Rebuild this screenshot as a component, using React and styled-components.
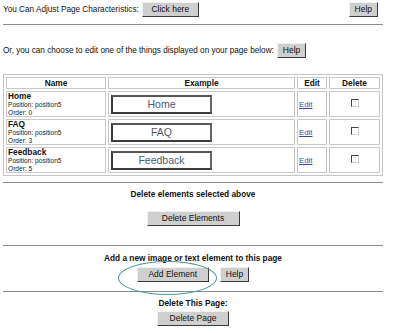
import React from "react";
import styled, { createGlobalStyle } from "styled-components";

const GlobalStyle = createGlobalStyle`
	body {
		margin: 0;
		background: #fff;
		font-family: "Liberation Sans", Arial, sans-serif;
		color: #111;
	}
`;

const Page = styled.div`
	width: 380px;
	padding: 2px 0 0 3px;
	font-size: 8.2px;
`;

const Row = styled.div`
	display: flex;
	align-items: center;
	justify-content: ${({ spread }) => (spread ? "space-between" : "flex-start")};
	gap: 3px;
	height: 15px;
	padding-right: ${({ spread }) => (spread ? 5 : 0)}px;
	margin-top: ${({ top }) => top || 0}px;
	white-space: nowrap;
`;

const Rule = styled.hr`
	border: none;
	border-top: 1px solid #8c8c8c;
	margin: ${({ top }) => top}px 0 0 0;
	height: 0;
`;

const Button = styled.button`
	font-family: "Liberation Sans", Arial, sans-serif;
	font-size: 8.5px;
	height: 15px;
	padding: 0 ${({ pad }) => pad || 5}px;
	background: #cfcfcf;
	border: 1px solid;
	border-color: #f2f2f2 #3a3a3a #3a3a3a #f2f2f2;
	color: #111;
	line-height: 13px;
	white-space: nowrap;
	width: ${({ w }) => (w ? w + "px" : "auto")};
`;

const Table = styled.table`
	margin-top: 16px;
	width: 380px;
	border-collapse: separate;
	border-spacing: 2px;
	border: 1px solid #c4c4c4;
`;

const Th = styled.th`
	border: 1px solid #c8c8c8;
	font-size: 8.3px;
	font-weight: bold;
	height: 10px;
	line-height: 10px;
	padding: 0;
	width: ${({ w }) => (w ? w + "px" : "auto")};
`;

const Td = styled.td`
	border: 1px solid #c8c8c8;
	padding: 0 1px;
	height: 23px;
	vertical-align: middle;
	text-align: ${({ align }) => align || "left"};
`;

const ItemName = styled.div`
	font-weight: bold;
	font-size: 8.3px;
	line-height: 9px;
`;

const ItemMeta = styled.div`
	font-size: 6.6px;
	line-height: 7.5px;
	color: #222;
`;

const Example = styled.div`
	box-sizing: border-box;
	width: 101px;
	height: 19px;
	border: 2px solid #3c3c3c;
	border-top-color: #555;
	border-right-color: #666;
	color: #4d5a70;
	font-size: 10.5px;
	text-align: center;
	line-height: 15px;
	margin-left: 1px;
`;

const EditLink = styled.a`
	color: #3a4aa8;
	font-size: 7.8px;
	text-decoration: underline;
`;

const Check = styled.span`
	display: inline-block;
	width: 6px;
	height: 6px;
	border: 1px solid #444;
	border-right-color: #ccc;
	border-bottom-color: #ccc;
`;

const Center = styled.div`
	display: flex;
	flex-direction: column;
	align-items: center;
	gap: ${({ gap }) => gap}px;
	padding-top: ${({ top }) => top}px;
`;

const Heading = styled.div`
	font-weight: bold;
	font-size: 8.3px;
	line-height: 11px;
`;

const Buttons = styled.div`
	display: flex;
	gap: 11px;
	position: relative;
`;

const Circle = styled.div`
	position: absolute;
	left: -19px;
	top: -6px;
	width: 99px;
	height: 34px;
	box-sizing: border-box;
	border: 1.5px solid #4f9a9a;
	border-radius: 50%;
	pointer-events: none;
`;

const items = [
	{ name: "Home", order: 0 },
	{ name: "FAQ", order: 3 },
	{ name: "Feedback", order: 5 },
];

export default function App() {
	return (
		<>
			<GlobalStyle />
			<Page>
				<Row spread>
					<Row>
						<span>You Can Adjust Page Characteristics:</span>
						<Button w={57}>Click here</Button>
					</Row>
					<Button>Help</Button>
				</Row>
				<Rule top={7} />
				<Row top={18}>
					<span>Or, you can choose to edit one of the things displayed on your page below:</span>
					<Button>Help</Button>
				</Row>
				<Table>
					<thead>
						<tr>
							<Th w={98}>Name</Th>
							<Th w={185}>Example</Th>
							<Th w={28}>Edit</Th>
							<Th>Delete</Th>
						</tr>
					</thead>
					<tbody>
						{items.map(item => (
							<tr key={item.name}>
								<Td>
									<ItemName>{item.name}</ItemName>
									<ItemMeta>Position: position5</ItemMeta>
									<ItemMeta>Order: {item.order}</ItemMeta>
								</Td>
								<Td>
									<Example>{item.name}</Example>
								</Td>
								<Td>
									<EditLink href="#">Edit</EditLink>
								</Td>
								<Td align="center">
									<Check />
								</Td>
							</tr>
						))}
					</tbody>
				</Table>
				<Rule top={6} />
				<Center gap={11} top={6}>
					<Heading>Delete elements selected above</Heading>
					<Button w={93}>Delete Elements</Button>
				</Center>
				<Rule top={19} />
				<Center gap={3} top={7}>
					<Heading>Add a new image or text element to this page</Heading>
					<Buttons>
						<Circle />
						<Button w={72}>Add Element</Button>
						<Button>Help</Button>
					</Buttons>
				</Center>
				<Rule top={9} />
				<Center gap={2} top={6}>
					<Heading>Delete This Page:</Heading>
					<Button w={72}>Delete Page</Button>
				</Center>
			</Page>
		</>
	);
}
